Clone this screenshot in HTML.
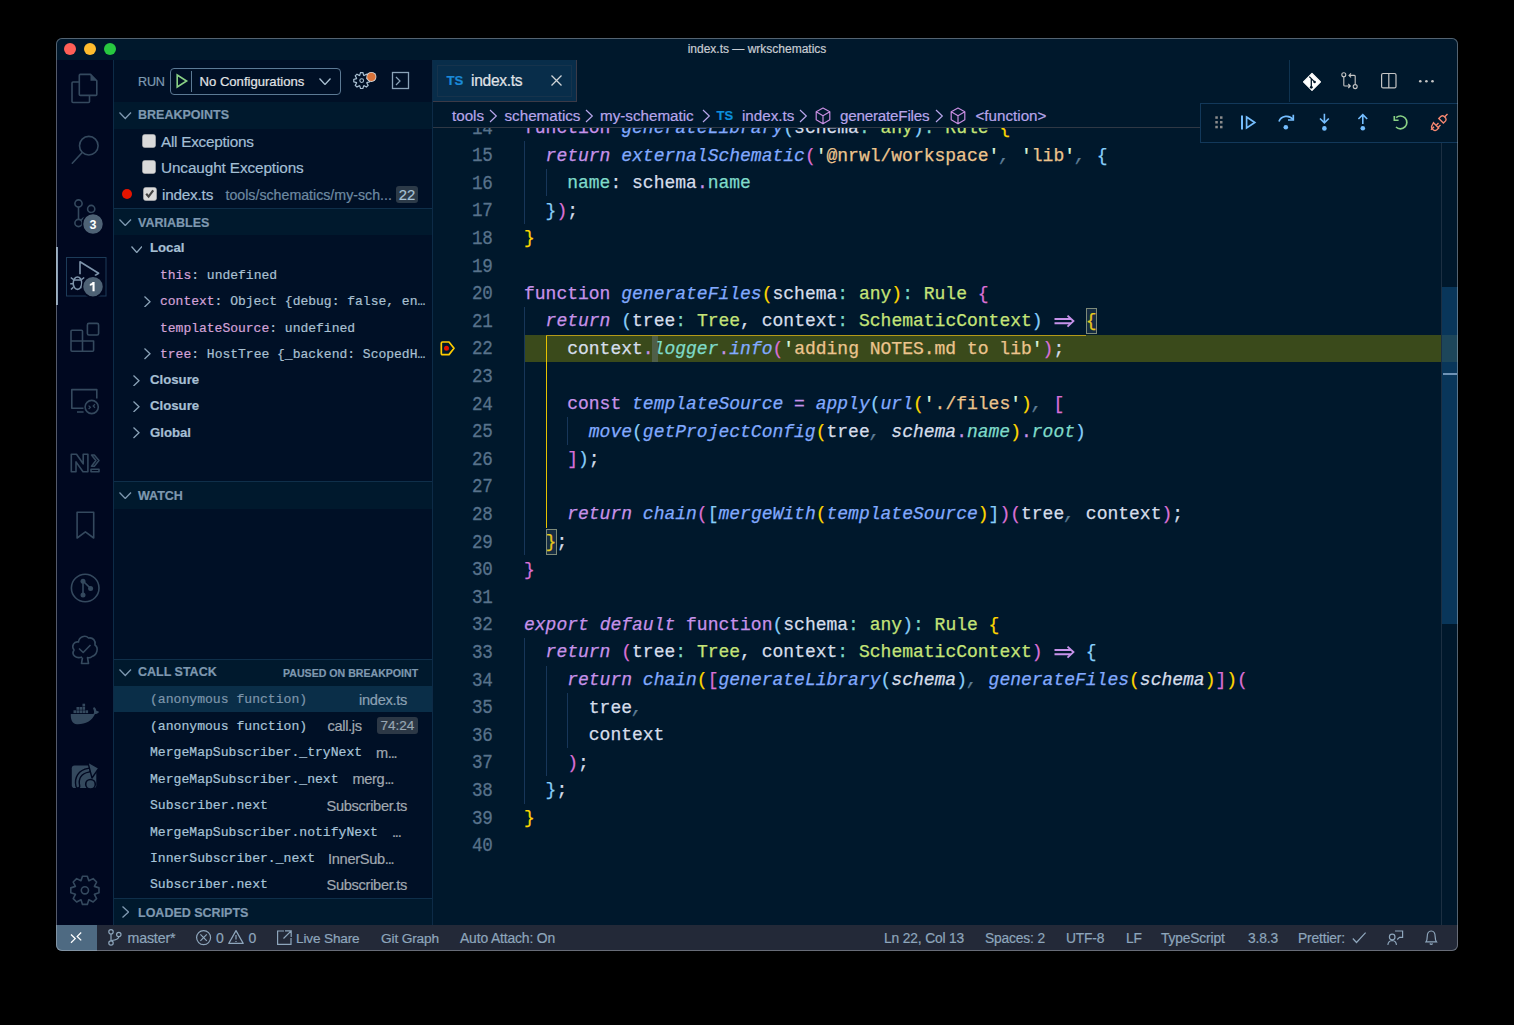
<!DOCTYPE html><html><head><meta charset="utf-8"><style>html,body{margin:0;padding:0;}body{width:1514px;height:1025px;background:#000;position:relative;overflow:hidden;font-family:"Liberation Sans",sans-serif;}div{box-sizing:border-box;-webkit-text-stroke:0.2px currentColor}.m{-webkit-text-stroke:0.25px currentColor}</style></head><body>
<div style="position:absolute;left:56px;top:38px;width:1402px;height:913px;border-radius:6px;overflow:hidden;background:#00182c">
<div style="position:absolute;left:-56px;top:-38px;width:1514px;height:1025px">
<div style="position:absolute;left:56px;top:38px;width:1402px;height:22px;background:#00182c"></div>
<div style="position:absolute;left:64px;top:43px;width:12px;height:12px;background:#fe5f57;border-radius:50%"></div>
<div style="position:absolute;left:84px;top:43px;width:12px;height:12px;background:#febc2e;border-radius:50%"></div>
<div style="position:absolute;left:104px;top:43px;width:12px;height:12px;background:#28c840;border-radius:50%"></div>
<div style="position:absolute;left:600px;top:38px;height:22px;line-height:22px;white-space:pre;width:314px;font-size:12px;color:#c8ccd2;text-align:center;font-family:'Liberation Sans', sans-serif">index.ts — wrkschematics</div>
<div style="position:absolute;left:56px;top:60px;width:57px;height:865px;background:#000820"></div>
<div style="position:absolute;left:56px;top:247px;width:2px;height:58px;background:#8aa0b5"></div>
<div style="position:absolute;left:113px;top:60px;width:1px;height:865px;background:#0d2b47"></div>
<div style="position:absolute;left:114px;top:60px;width:318px;height:865px;background:#001026"></div>
<div style="position:absolute;left:432px;top:60px;width:1px;height:865px;background:#0d2b47"></div>
<div style="position:absolute;left:138px;top:72px;height:20px;line-height:20px;white-space:pre;font-size:12.6px;color:#7f9ab2;letter-spacing:-0.2px">RUN</div>
<div style="position:absolute;left:170px;top:68px;width:171px;height:27px;border:1px solid #5c7a94;border-radius:4px"></div>
<svg style="position:absolute;left:175px;top:73px" width="14" height="16" viewBox="0 0 14 16"><path d="M2.2 2 L11.6 8 L2.2 14 Z" fill="none" stroke="#89d185" stroke-width="1.6" stroke-linejoin="miter"/></svg>
<div style="position:absolute;left:191px;top:71px;width:1px;height:21px;background:#5c7a94"></div>
<div style="position:absolute;left:199.5px;top:71.5px;height:20px;line-height:20px;white-space:pre;font-size:13.1px;color:#e2e4e6">No Configurations</div>
<svg style="position:absolute;left:318.5px;top:77.5px" width="12" height="7.5" viewBox="0 0 12 7.5"><path d="M0.5 0.5 L6.0 6.5 L11.5 0.5" fill="none" stroke="#a9c0d2" stroke-width="1.3"/></svg>
<svg style="position:absolute;left:352px;top:71px" width="26" height="20" viewBox="0 0 26 20"><polygon points="14.94,7.63 17.61,8.40 17.61,10.80 14.94,11.57 14.80,11.91 16.14,14.35 14.45,16.04 12.01,14.70 11.67,14.84 10.90,17.51 8.50,17.51 7.73,14.84 7.39,14.70 4.95,16.04 3.26,14.35 4.60,11.91 4.46,11.57 1.79,10.80 1.79,8.40 4.46,7.63 4.60,7.29 3.26,4.85 4.95,3.16 7.39,4.50 7.73,4.36 8.50,1.69 10.90,1.69 11.67,4.36 12.01,4.50 14.45,3.16 16.14,4.85 14.80,7.29" fill="none" stroke="#a9c0d2" stroke-width="1.2"/><circle cx="9.699999999999989" cy="9.599999999999994" r="1.9" fill="none" stroke="#a9c0d2" stroke-width="1.1"/><circle cx="19.4" cy="5.9" r="5" fill="#d8d8d8"/><circle cx="19.4" cy="5.9" r="4.2" fill="#d9733a"/></svg>
<svg style="position:absolute;left:391px;top:71px" width="19" height="19" viewBox="0 0 19 19"><rect x="1.5" y="1.5" width="16" height="16" fill="none" stroke="#8aa3b8" stroke-width="1.3"/><path d="M5 6 L9 10 L5 14" fill="none" stroke="#8aa3b8" stroke-width="1.2"/></svg>
<div style="position:absolute;left:114px;top:101.5px;width:318px;height:27px;background:#00192d"></div>
<svg style="position:absolute;left:119px;top:112.0px" width="12.5" height="7.5" viewBox="0 0 12.5 7.5"><path d="M0.5 0.5 L6.25 6.5 L12.0 0.5" fill="none" stroke="#7e98b0" stroke-width="1.3"/></svg>
<div style="position:absolute;left:138px;top:102.0px;height:27px;line-height:27px;white-space:pre;font-size:12.5px;font-weight:bold;color:#7e98b0">BREAKPOINTS</div>
<svg style="position:absolute;left:141.7px;top:133.7px" width="14" height="14" viewBox="0 0 14 14"><rect x="0.5" y="0.5" width="13" height="13" rx="2.2" fill="#dadada" stroke="#b9b9b9" stroke-width="0.6"/></svg>
<div style="position:absolute;left:161px;top:128.5px;height:26.4px;line-height:26.4px;white-space:pre;font-size:15.3px;color:#a3bfd5;letter-spacing:-0.25px">All Exceptions</div>
<svg style="position:absolute;left:141.7px;top:159.5px" width="14" height="14" viewBox="0 0 14 14"><rect x="0.5" y="0.5" width="13" height="13" rx="2.2" fill="#dadada" stroke="#b9b9b9" stroke-width="0.6"/></svg>
<div style="position:absolute;left:161px;top:155px;height:26.4px;line-height:26.4px;white-space:pre;font-size:15.3px;color:#a3bfd5;letter-spacing:-0.1px">Uncaught Exceptions</div>
<div style="position:absolute;left:122.2px;top:189.2px;width:10px;height:10px;background:#e51400;border-radius:50%"></div>
<svg style="position:absolute;left:142.5px;top:186.7px" width="14" height="14" viewBox="0 0 14 14"><rect x="0.5" y="0.5" width="13" height="13" rx="2.2" fill="#dadada" stroke="#b9b9b9" stroke-width="0.6"/><path d="M3.2 6.8 L5.6 9.6 L10.2 3.4" fill="none" stroke="#444" stroke-width="2.2"/></svg>
<div style="position:absolute;left:162px;top:181.5px;height:26.4px;line-height:26.4px;white-space:pre;font-size:15.3px;color:#a3bfd5;letter-spacing:-0.2px">index.ts</div>
<div style="position:absolute;left:225.5px;top:181.5px;height:26.4px;line-height:26.4px;white-space:pre;font-size:14.2px;color:#6e8aa2;letter-spacing:0px">tools/schematics/my-sch...</div>
<div style="position:absolute;left:396px;top:186px;width:22px;height:16.5px;background:#2c3a48;border-radius:3px"></div>
<div style="position:absolute;left:396px;top:187.2px;height:16.5px;line-height:16.5px;white-space:pre;font-size:14.8px;color:#a8c2d6;text-align:center;width:22px">22</div>
<div style="position:absolute;left:114px;top:208.3px;width:318px;height:1px;background:#0f2f4a"></div>
<div style="position:absolute;left:114px;top:209.3px;width:318px;height:25.5px;background:#00192d"></div>
<svg style="position:absolute;left:119px;top:218.8px" width="12.5" height="7.5" viewBox="0 0 12.5 7.5"><path d="M0.5 0.5 L6.25 6.5 L12.0 0.5" fill="none" stroke="#7e98b0" stroke-width="1.3"/></svg>
<div style="position:absolute;left:138px;top:209.55px;height:27px;line-height:27px;white-space:pre;font-size:12.5px;font-weight:bold;color:#7e98b0">VARIABLES</div>
<svg style="position:absolute;left:130.5px;top:245.5px" width="11.5" height="7.5" viewBox="0 0 11.5 7.5"><path d="M0.5 0.5 L5.75 6.5 L11.0 0.5" fill="none" stroke="#8aa3b8" stroke-width="1.3"/></svg>
<div style="position:absolute;left:150px;top:235px;height:26.4px;line-height:26.4px;white-space:pre;font-size:13.2px;font-weight:bold;color:#a6bfd3">Local</div>
<div style="position:absolute;left:160px;top:262.8px;height:26.4px;line-height:26.4px;white-space:pre;font-family:'Liberation Mono', monospace;font-size:13px"><span style="color:#d4a2d8">this</span><span style="color:#a9c0d2">: </span><span style="color:#a9c0d2">undefined</span></div>
<svg style="position:absolute;left:144px;top:295.5px" width="7" height="11.5" viewBox="0 0 7 11.5"><path d="M0.5 0.5 L6 5.75 L0.5 11.0" fill="none" stroke="#8aa3b8" stroke-width="1.3"/></svg>
<div style="position:absolute;left:160px;top:289.3px;height:26.4px;line-height:26.4px;white-space:pre;font-family:'Liberation Mono', monospace;font-size:13px"><span style="color:#d4a2d8">context</span><span style="color:#a9c0d2">: </span><span style="color:#a9c0d2">Object {debug: false, en…</span></div>
<div style="position:absolute;left:160px;top:315.6px;height:26.4px;line-height:26.4px;white-space:pre;font-family:'Liberation Mono', monospace;font-size:13px"><span style="color:#d4a2d8">templateSource</span><span style="color:#a9c0d2">: </span><span style="color:#a9c0d2">undefined</span></div>
<svg style="position:absolute;left:144px;top:348.3px" width="7" height="11.5" viewBox="0 0 7 11.5"><path d="M0.5 0.5 L6 5.75 L0.5 11.0" fill="none" stroke="#8aa3b8" stroke-width="1.3"/></svg>
<div style="position:absolute;left:160px;top:342px;height:26.4px;line-height:26.4px;white-space:pre;font-family:'Liberation Mono', monospace;font-size:13px"><span style="color:#d4a2d8">tree</span><span style="color:#a9c0d2">: </span><span style="color:#a9c0d2">HostTree {_backend: ScopedH…</span></div>
<svg style="position:absolute;left:133px;top:374.5px" width="7" height="11.5" viewBox="0 0 7 11.5"><path d="M0.5 0.5 L6 5.75 L0.5 11.0" fill="none" stroke="#8aa3b8" stroke-width="1.3"/></svg>
<div style="position:absolute;left:150px;top:367.0px;height:26.4px;line-height:26.4px;white-space:pre;font-size:13.2px;font-weight:bold;color:#a6bfd3">Closure</div>
<svg style="position:absolute;left:133px;top:400.9px" width="7" height="11.5" viewBox="0 0 7 11.5"><path d="M0.5 0.5 L6 5.75 L0.5 11.0" fill="none" stroke="#8aa3b8" stroke-width="1.3"/></svg>
<div style="position:absolute;left:150px;top:393.4px;height:26.4px;line-height:26.4px;white-space:pre;font-size:13.2px;font-weight:bold;color:#a6bfd3">Closure</div>
<svg style="position:absolute;left:133px;top:427.3px" width="7" height="11.5" viewBox="0 0 7 11.5"><path d="M0.5 0.5 L6 5.75 L0.5 11.0" fill="none" stroke="#8aa3b8" stroke-width="1.3"/></svg>
<div style="position:absolute;left:150px;top:419.8px;height:26.4px;line-height:26.4px;white-space:pre;font-size:13.2px;font-weight:bold;color:#a6bfd3">Global</div>
<div style="position:absolute;left:114px;top:481.4px;width:318px;height:1px;background:#0f2f4a"></div>
<div style="position:absolute;left:114px;top:482.4px;width:318px;height:26.7px;background:#00192d"></div>
<svg style="position:absolute;left:119px;top:491.9px" width="12.5" height="7.5" viewBox="0 0 12.5 7.5"><path d="M0.5 0.5 L6.25 6.5 L12.0 0.5" fill="none" stroke="#7e98b0" stroke-width="1.3"/></svg>
<div style="position:absolute;left:138px;top:483.05px;height:27px;line-height:27px;white-space:pre;font-size:12.5px;font-weight:bold;color:#7e98b0">WATCH</div>
<div style="position:absolute;left:114px;top:658.5px;width:318px;height:1px;background:#0f2f4a"></div>
<div style="position:absolute;left:114px;top:659.5px;width:318px;height:26.7px;background:#00192d"></div>
<svg style="position:absolute;left:119px;top:669.0px" width="12.5" height="7.5" viewBox="0 0 12.5 7.5"><path d="M0.5 0.5 L6.25 6.5 L12.0 0.5" fill="none" stroke="#7e98b0" stroke-width="1.3"/></svg>
<div style="position:absolute;left:138px;top:659.45px;height:27px;line-height:27px;white-space:pre;font-size:12.5px;font-weight:bold;color:#7e98b0">CALL STACK</div>
<div style="position:absolute;left:283px;top:659.6px;height:27px;line-height:27px;white-space:pre;font-size:10.6px;font-weight:bold;color:#7e98b0">PAUSED ON BREAKPOINT</div>
<div style="position:absolute;left:114px;top:686.2px;width:318px;height:25.8px;background:#0a2e48"></div>
<div style="position:absolute;left:150px;top:687.3px;height:26.4px;line-height:26.4px;white-space:pre;font-family:'Liberation Mono', monospace;font-size:13.1px"><span style="color:#7d95ab">(anonymous function)</span></div>
<div style="position:absolute;right:1107px;top:687.0px;height:26.4px;line-height:26.4px;white-space:pre;font-size:14.6px;color:#8aa0b3;letter-spacing:-0.3px">index.ts</div>
<div style="position:absolute;left:150px;top:713.75px;height:26.4px;line-height:26.4px;white-space:pre;font-family:'Liberation Mono', monospace;font-size:13.1px"><span style="color:#a8c4d8">(anonymous function)</span></div>
<div style="position:absolute;left:377px;top:717.45px;width:41px;height:17px;background:#2c3846;border-radius:3px"></div>
<div style="position:absolute;left:377px;top:717.45px;height:17px;line-height:17px;white-space:pre;font-size:13.5px;color:#98a6b2;text-align:center;width:41px">74:24</div>
<div style="position:absolute;left:327.4px;top:713.45px;height:26.4px;line-height:26.4px;white-space:pre;font-size:14.6px;color:#a0a8b0;letter-spacing:-0.3px">call.js</div>
<div style="position:absolute;left:150px;top:740.1999999999999px;height:26.4px;line-height:26.4px;white-space:pre;font-family:'Liberation Mono', monospace;font-size:13.1px"><span style="color:#a8c4d8">MergeMapSubscriber._tryNext</span></div>
<div style="position:absolute;left:376px;top:739.9px;height:26.4px;line-height:26.4px;white-space:pre;font-size:14.6px;color:#a0a8b0;letter-spacing:-0.3px">m<span style="letter-spacing:-1.2px">...</span></div>
<div style="position:absolute;left:150px;top:766.65px;height:26.4px;line-height:26.4px;white-space:pre;font-family:'Liberation Mono', monospace;font-size:13.1px"><span style="color:#a8c4d8">MergeMapSubscriber._next</span></div>
<div style="position:absolute;left:352.4px;top:766.35px;height:26.4px;line-height:26.4px;white-space:pre;font-size:14.6px;color:#a0a8b0;letter-spacing:-0.3px">merg<span style="letter-spacing:-1.2px">...</span></div>
<div style="position:absolute;left:150px;top:793.0999999999999px;height:26.4px;line-height:26.4px;white-space:pre;font-family:'Liberation Mono', monospace;font-size:13.1px"><span style="color:#a8c4d8">Subscriber.next</span></div>
<div style="position:absolute;right:1107px;top:792.8px;height:26.4px;line-height:26.4px;white-space:pre;font-size:14.6px;color:#a0a8b0;letter-spacing:-0.3px">Subscriber.ts</div>
<div style="position:absolute;left:150px;top:819.55px;height:26.4px;line-height:26.4px;white-space:pre;font-family:'Liberation Mono', monospace;font-size:13.1px"><span style="color:#a8c4d8">MergeMapSubscriber.notifyNext</span></div>
<div style="position:absolute;left:392px;top:819.25px;height:26.4px;line-height:26.4px;white-space:pre;font-size:14.6px;color:#a0a8b0;letter-spacing:-0.3px"><span style="letter-spacing:-1.2px">...</span></div>
<div style="position:absolute;left:150px;top:846.0px;height:26.4px;line-height:26.4px;white-space:pre;font-family:'Liberation Mono', monospace;font-size:13.1px"><span style="color:#a8c4d8">InnerSubscriber._next</span></div>
<div style="position:absolute;left:328px;top:845.7px;height:26.4px;line-height:26.4px;white-space:pre;font-size:14.6px;color:#a0a8b0;letter-spacing:-0.3px">InnerSub<span style="letter-spacing:-1.2px">...</span></div>
<div style="position:absolute;left:150px;top:872.4499999999999px;height:26.4px;line-height:26.4px;white-space:pre;font-family:'Liberation Mono', monospace;font-size:13.1px"><span style="color:#a8c4d8">Subscriber.next</span></div>
<div style="position:absolute;right:1107px;top:872.15px;height:26.4px;line-height:26.4px;white-space:pre;font-size:14.6px;color:#a0a8b0;letter-spacing:-0.3px">Subscriber.ts</div>
<div style="position:absolute;left:114px;top:898px;width:318px;height:1px;background:#0f2f4a"></div>
<div style="position:absolute;left:114px;top:899px;width:318px;height:26.5px;background:#00192d"></div>
<svg style="position:absolute;left:121.5px;top:906px" width="7.5" height="12" viewBox="0 0 7.5 12"><path d="M0.5 0.5 L6.5 6.0 L0.5 11.5" fill="none" stroke="#7e98b0" stroke-width="1.3"/></svg>
<div style="position:absolute;left:138px;top:899.55px;height:27px;line-height:27px;white-space:pre;font-size:12.5px;font-weight:bold;color:#7e98b0">LOADED SCRIPTS</div>
<div style="position:absolute;left:433px;top:60px;width:1025px;height:42px;background:#00182c"></div>
<div style="position:absolute;left:433px;top:60px;width:144px;height:42px;background:#082d4a;border-right:1px solid #3b3a47;border-bottom:1px solid #3b3a47"></div>
<div style="position:absolute;left:437px;top:65px;width:135px;height:32px;border:1px solid #16334c"></div>
<div style="position:absolute;left:446.5px;top:70px;height:22px;line-height:22px;white-space:pre;font-size:13.2px;font-weight:bold;color:#1a8ad8;letter-spacing:0px">TS</div>
<div style="position:absolute;left:471px;top:70px;height:22px;line-height:22px;white-space:pre;font-size:15.6px;color:#e0e4e8;letter-spacing:-0.3px">index.ts</div>
<svg style="position:absolute;left:550px;top:74px" width="13" height="13" viewBox="0 0 13 13"><path d="M1.5 1.5 L11.5 11.5 M11.5 1.5 L1.5 11.5" stroke="#d0d4d8" stroke-width="1.3"/></svg>
<div style="position:absolute;left:1289px;top:60px;width:1px;height:42px;background:#0f3350"></div>
<svg style="position:absolute;left:1300px;top:70px" width="150" height="24" viewBox="1300 70 150 24">
<path d="M1312 73.4 L1320.5 81.9 L1312 90.4 L1303.5 81.9 Z" fill="#ffffff" stroke="#ffffff" stroke-width="1.2" stroke-linejoin="round"/>
<path d="M1309.3 76.6 L1314.3 81.6 M1311.3 79 V87" stroke="#011627" stroke-width="1.3"/>
<circle cx="1311.3" cy="87.3" r="1.4" fill="#011627"/><circle cx="1314.6" cy="82" r="1.3" fill="#011627"/>
<circle cx="1343.8" cy="74.8" r="2" fill="none" stroke="#c5c5c5" stroke-width="1.1"/>
<circle cx="1355.2" cy="86.6" r="2" fill="none" stroke="#c5c5c5" stroke-width="1.1"/>
<path d="M1343.8 76.8 V85.2 Q1343.8 86 1345 86 H1350 M1348.3 84 L1350.3 86 L1348.3 88" fill="none" stroke="#c5c5c5" stroke-width="1.1"/>
<path d="M1355.2 84.6 V76.2 Q1355.2 75.4 1354 75.4 H1349.2 M1351 73.4 L1349 75.4 L1351 77.4" fill="none" stroke="#c5c5c5" stroke-width="1.1"/>
<rect x="1381.6" y="73.5" width="14.4" height="14.4" rx="1.5" fill="none" stroke="#c5c5c5" stroke-width="1.2"/>
<path d="M1388.8 73.5 V88" stroke="#c5c5c5" stroke-width="1.2"/>
<circle cx="1420.3" cy="81.3" r="1.3" fill="#c5c5c5"/><circle cx="1426.4" cy="81.3" r="1.3" fill="#c5c5c5"/><circle cx="1432.5" cy="81.3" r="1.3" fill="#c5c5c5"/>
</svg>
<div style="position:absolute;left:524px;top:334.5px;width:918px;height:27.6px;background:#3a4a1b"></div>
<div style="position:absolute;left:652.4px;top:334.5px;width:5.5px;height:27.6px;background:#4f5f48"></div>
<div class="m" style="position:absolute;left:524px;top:114.90px;height:27.6px;line-height:27.6px;white-space:pre;font-family:'Liberation Mono', monospace;font-size:18px;color:#d6deeb"><span style="color:#c792ea">function</span> <span style="color:#82aaff;font-style:italic">generateLibrary</span><span style="color:#87cefa">(</span><span style="color:#d6deeb">schema</span><span style="color:#7fdbca">:</span> <span style="color:#c5e478">any</span><span style="color:#87cefa">)</span><span style="color:#7fdbca">:</span> <span style="color:#c5e478">Rule</span> <span style="color:#ffd700">{</span></div>
<div class="m" style="position:absolute;left:432px;top:114.50px;width:60.5px;height:27.6px;line-height:27.6px;text-align:right;font-family:'Liberation Mono', monospace;font-size:17.6px;letter-spacing:-0.3px;color:#58728b;transform:scaleY(1.16);transform-origin:50% 52%">14</div>
<div class="m" style="position:absolute;left:524px;top:142.50px;height:27.6px;line-height:27.6px;white-space:pre;font-family:'Liberation Mono', monospace;font-size:18px;color:#d6deeb">  <span style="color:#c792ea;font-style:italic">return</span> <span style="color:#82aaff;font-style:italic">externalSchematic</span><span style="color:#da70d6">(</span><span style="color:#d9f5dd">'</span><span style="color:#ecc48d">@nrwl/workspace</span><span style="color:#d9f5dd">'</span><span style="color:#5f7e97;font-style:italic">,</span> <span style="color:#d9f5dd">'</span><span style="color:#ecc48d">lib</span><span style="color:#d9f5dd">'</span><span style="color:#5f7e97;font-style:italic">,</span> <span style="color:#87cefa">{</span></div>
<div class="m" style="position:absolute;left:432px;top:142.10px;width:60.5px;height:27.6px;line-height:27.6px;text-align:right;font-family:'Liberation Mono', monospace;font-size:17.6px;letter-spacing:-0.3px;color:#58728b;transform:scaleY(1.16);transform-origin:50% 52%">15</div>
<div class="m" style="position:absolute;left:524px;top:170.10px;height:27.6px;line-height:27.6px;white-space:pre;font-family:'Liberation Mono', monospace;font-size:18px;color:#d6deeb">    <span style="color:#7fdbca">name</span><span style="color:#d6deeb">:</span> <span style="color:#d6deeb">schema</span><span style="color:#c792ea">.</span><span style="color:#7fdbca">name</span></div>
<div class="m" style="position:absolute;left:432px;top:169.70px;width:60.5px;height:27.6px;line-height:27.6px;text-align:right;font-family:'Liberation Mono', monospace;font-size:17.6px;letter-spacing:-0.3px;color:#58728b;transform:scaleY(1.16);transform-origin:50% 52%">16</div>
<div class="m" style="position:absolute;left:524px;top:197.70px;height:27.6px;line-height:27.6px;white-space:pre;font-family:'Liberation Mono', monospace;font-size:18px;color:#d6deeb">  <span style="color:#87cefa">}</span><span style="color:#da70d6">)</span><span style="color:#d6deeb">;</span></div>
<div class="m" style="position:absolute;left:432px;top:197.30px;width:60.5px;height:27.6px;line-height:27.6px;text-align:right;font-family:'Liberation Mono', monospace;font-size:17.6px;letter-spacing:-0.3px;color:#58728b;transform:scaleY(1.16);transform-origin:50% 52%">17</div>
<div class="m" style="position:absolute;left:524px;top:225.30px;height:27.6px;line-height:27.6px;white-space:pre;font-family:'Liberation Mono', monospace;font-size:18px;color:#d6deeb"><span style="color:#ffd700">}</span></div>
<div class="m" style="position:absolute;left:432px;top:224.90px;width:60.5px;height:27.6px;line-height:27.6px;text-align:right;font-family:'Liberation Mono', monospace;font-size:17.6px;letter-spacing:-0.3px;color:#58728b;transform:scaleY(1.16);transform-origin:50% 52%">18</div>
<div class="m" style="position:absolute;left:524px;top:252.90px;height:27.6px;line-height:27.6px;white-space:pre;font-family:'Liberation Mono', monospace;font-size:18px;color:#d6deeb"></div>
<div class="m" style="position:absolute;left:432px;top:252.50px;width:60.5px;height:27.6px;line-height:27.6px;text-align:right;font-family:'Liberation Mono', monospace;font-size:17.6px;letter-spacing:-0.3px;color:#58728b;transform:scaleY(1.16);transform-origin:50% 52%">19</div>
<div class="m" style="position:absolute;left:524px;top:280.50px;height:27.6px;line-height:27.6px;white-space:pre;font-family:'Liberation Mono', monospace;font-size:18px;color:#d6deeb"><span style="color:#c792ea">function</span> <span style="color:#82aaff;font-style:italic">generateFiles</span><span style="color:#ffd700">(</span><span style="color:#d6deeb">schema</span><span style="color:#7fdbca">:</span> <span style="color:#c5e478">any</span><span style="color:#ffd700">)</span><span style="color:#7fdbca">:</span> <span style="color:#c5e478">Rule</span> <span style="color:#da70d6">{</span></div>
<div class="m" style="position:absolute;left:432px;top:280.10px;width:60.5px;height:27.6px;line-height:27.6px;text-align:right;font-family:'Liberation Mono', monospace;font-size:17.6px;letter-spacing:-0.3px;color:#58728b;transform:scaleY(1.16);transform-origin:50% 52%">20</div>
<div class="m" style="position:absolute;left:524px;top:308.10px;height:27.6px;line-height:27.6px;white-space:pre;font-family:'Liberation Mono', monospace;font-size:18px;color:#d6deeb">  <span style="color:#c792ea;font-style:italic">return</span> <span style="color:#87cefa">(</span><span style="color:#d6deeb">tree</span><span style="color:#7fdbca">:</span> <span style="color:#c5e478">Tree</span><span style="color:#d6deeb">,</span> <span style="color:#d6deeb">context</span><span style="color:#7fdbca">:</span> <span style="color:#c5e478">SchematicContext</span><span style="color:#87cefa">)</span> <span style="display:inline-block;width:21.6px;height:10px;position:relative"><svg style="position:absolute;left:1px;top:-2.2px" width="21" height="14" viewBox="0 0 21 14"><path d="M0.5 5 H17.5 M0.5 9.2 H17.5 M13.5 1.6 L19.4 7.1 L13.5 12.6" fill="none" stroke="#c792ea" stroke-width="1.9"/></svg></span> <span style="color:#ffd700">{</span></div>
<div class="m" style="position:absolute;left:432px;top:307.70px;width:60.5px;height:27.6px;line-height:27.6px;text-align:right;font-family:'Liberation Mono', monospace;font-size:17.6px;letter-spacing:-0.3px;color:#58728b;transform:scaleY(1.16);transform-origin:50% 52%">21</div>
<div class="m" style="position:absolute;left:524px;top:335.70px;height:27.6px;line-height:27.6px;white-space:pre;font-family:'Liberation Mono', monospace;font-size:18px;color:#d6deeb">    <span style="color:#d6deeb">context</span><span style="color:#c792ea">.</span><span style="color:#7fdbca;font-style:italic">logger</span><span style="color:#c792ea">.</span><span style="color:#82aaff;font-style:italic">info</span><span style="color:#da70d6">(</span><span style="color:#d9f5dd">'</span><span style="color:#ecc48d">adding NOTES.md to lib</span><span style="color:#d9f5dd">'</span><span style="color:#da70d6">)</span><span style="color:#d6deeb">;</span></div>
<div class="m" style="position:absolute;left:432px;top:335.30px;width:60.5px;height:27.6px;line-height:27.6px;text-align:right;font-family:'Liberation Mono', monospace;font-size:17.6px;letter-spacing:-0.3px;color:#58728b;transform:scaleY(1.16);transform-origin:50% 52%">22</div>
<div class="m" style="position:absolute;left:524px;top:363.30px;height:27.6px;line-height:27.6px;white-space:pre;font-family:'Liberation Mono', monospace;font-size:18px;color:#d6deeb"></div>
<div class="m" style="position:absolute;left:432px;top:362.90px;width:60.5px;height:27.6px;line-height:27.6px;text-align:right;font-family:'Liberation Mono', monospace;font-size:17.6px;letter-spacing:-0.3px;color:#58728b;transform:scaleY(1.16);transform-origin:50% 52%">23</div>
<div class="m" style="position:absolute;left:524px;top:390.90px;height:27.6px;line-height:27.6px;white-space:pre;font-family:'Liberation Mono', monospace;font-size:18px;color:#d6deeb">    <span style="color:#c792ea">const</span> <span style="color:#82aaff;font-style:italic">templateSource</span> <span style="color:#c792ea">=</span> <span style="color:#82aaff;font-style:italic">apply</span><span style="color:#87cefa">(</span><span style="color:#82aaff;font-style:italic">url</span><span style="color:#ffd700">(</span><span style="color:#d9f5dd">'</span><span style="color:#ecc48d">./files</span><span style="color:#d9f5dd">'</span><span style="color:#ffd700">)</span><span style="color:#5f7e97;font-style:italic">,</span> <span style="color:#da70d6">[</span></div>
<div class="m" style="position:absolute;left:432px;top:390.50px;width:60.5px;height:27.6px;line-height:27.6px;text-align:right;font-family:'Liberation Mono', monospace;font-size:17.6px;letter-spacing:-0.3px;color:#58728b;transform:scaleY(1.16);transform-origin:50% 52%">24</div>
<div class="m" style="position:absolute;left:524px;top:418.50px;height:27.6px;line-height:27.6px;white-space:pre;font-family:'Liberation Mono', monospace;font-size:18px;color:#d6deeb">      <span style="color:#82aaff;font-style:italic">move</span><span style="color:#87cefa">(</span><span style="color:#82aaff;font-style:italic">getProjectConfig</span><span style="color:#ffd700">(</span><span style="color:#d6deeb">tree</span><span style="color:#5f7e97;font-style:italic">,</span> <span style="color:#d6deeb;font-style:italic">schema</span><span style="color:#c792ea">.</span><span style="color:#7fdbca;font-style:italic">name</span><span style="color:#ffd700">)</span><span style="color:#c792ea">.</span><span style="color:#7fdbca;font-style:italic">root</span><span style="color:#87cefa">)</span></div>
<div class="m" style="position:absolute;left:432px;top:418.10px;width:60.5px;height:27.6px;line-height:27.6px;text-align:right;font-family:'Liberation Mono', monospace;font-size:17.6px;letter-spacing:-0.3px;color:#58728b;transform:scaleY(1.16);transform-origin:50% 52%">25</div>
<div class="m" style="position:absolute;left:524px;top:446.10px;height:27.6px;line-height:27.6px;white-space:pre;font-family:'Liberation Mono', monospace;font-size:18px;color:#d6deeb">    <span style="color:#da70d6">]</span><span style="color:#87cefa">)</span><span style="color:#d6deeb">;</span></div>
<div class="m" style="position:absolute;left:432px;top:445.70px;width:60.5px;height:27.6px;line-height:27.6px;text-align:right;font-family:'Liberation Mono', monospace;font-size:17.6px;letter-spacing:-0.3px;color:#58728b;transform:scaleY(1.16);transform-origin:50% 52%">26</div>
<div class="m" style="position:absolute;left:524px;top:473.70px;height:27.6px;line-height:27.6px;white-space:pre;font-family:'Liberation Mono', monospace;font-size:18px;color:#d6deeb"></div>
<div class="m" style="position:absolute;left:432px;top:473.30px;width:60.5px;height:27.6px;line-height:27.6px;text-align:right;font-family:'Liberation Mono', monospace;font-size:17.6px;letter-spacing:-0.3px;color:#58728b;transform:scaleY(1.16);transform-origin:50% 52%">27</div>
<div class="m" style="position:absolute;left:524px;top:501.30px;height:27.6px;line-height:27.6px;white-space:pre;font-family:'Liberation Mono', monospace;font-size:18px;color:#d6deeb">    <span style="color:#c792ea;font-style:italic">return</span> <span style="color:#82aaff;font-style:italic">chain</span><span style="color:#da70d6">(</span><span style="color:#87cefa">[</span><span style="color:#82aaff;font-style:italic">mergeWith</span><span style="color:#ffd700">(</span><span style="color:#82aaff;font-style:italic">templateSource</span><span style="color:#ffd700">)</span><span style="color:#87cefa">]</span><span style="color:#da70d6">)</span><span style="color:#da70d6">(</span><span style="color:#d6deeb">tree</span><span style="color:#5f7e97;font-style:italic">,</span> <span style="color:#d6deeb">context</span><span style="color:#da70d6">)</span><span style="color:#d6deeb">;</span></div>
<div class="m" style="position:absolute;left:432px;top:500.90px;width:60.5px;height:27.6px;line-height:27.6px;text-align:right;font-family:'Liberation Mono', monospace;font-size:17.6px;letter-spacing:-0.3px;color:#58728b;transform:scaleY(1.16);transform-origin:50% 52%">28</div>
<div class="m" style="position:absolute;left:524px;top:528.90px;height:27.6px;line-height:27.6px;white-space:pre;font-family:'Liberation Mono', monospace;font-size:18px;color:#d6deeb">  <span style="color:#ffd700">}</span><span style="color:#d6deeb">;</span></div>
<div class="m" style="position:absolute;left:432px;top:528.50px;width:60.5px;height:27.6px;line-height:27.6px;text-align:right;font-family:'Liberation Mono', monospace;font-size:17.6px;letter-spacing:-0.3px;color:#58728b;transform:scaleY(1.16);transform-origin:50% 52%">29</div>
<div class="m" style="position:absolute;left:524px;top:556.50px;height:27.6px;line-height:27.6px;white-space:pre;font-family:'Liberation Mono', monospace;font-size:18px;color:#d6deeb"><span style="color:#da70d6">}</span></div>
<div class="m" style="position:absolute;left:432px;top:556.10px;width:60.5px;height:27.6px;line-height:27.6px;text-align:right;font-family:'Liberation Mono', monospace;font-size:17.6px;letter-spacing:-0.3px;color:#58728b;transform:scaleY(1.16);transform-origin:50% 52%">30</div>
<div class="m" style="position:absolute;left:524px;top:584.10px;height:27.6px;line-height:27.6px;white-space:pre;font-family:'Liberation Mono', monospace;font-size:18px;color:#d6deeb"></div>
<div class="m" style="position:absolute;left:432px;top:583.70px;width:60.5px;height:27.6px;line-height:27.6px;text-align:right;font-family:'Liberation Mono', monospace;font-size:17.6px;letter-spacing:-0.3px;color:#58728b;transform:scaleY(1.16);transform-origin:50% 52%">31</div>
<div class="m" style="position:absolute;left:524px;top:611.70px;height:27.6px;line-height:27.6px;white-space:pre;font-family:'Liberation Mono', monospace;font-size:18px;color:#d6deeb"><span style="color:#c792ea;font-style:italic">export</span> <span style="color:#c792ea;font-style:italic">default</span> <span style="color:#c792ea">function</span><span style="color:#87cefa">(</span><span style="color:#d6deeb">schema</span><span style="color:#7fdbca">:</span> <span style="color:#c5e478">any</span><span style="color:#87cefa">)</span><span style="color:#7fdbca">:</span> <span style="color:#c5e478">Rule</span> <span style="color:#ffd700">{</span></div>
<div class="m" style="position:absolute;left:432px;top:611.30px;width:60.5px;height:27.6px;line-height:27.6px;text-align:right;font-family:'Liberation Mono', monospace;font-size:17.6px;letter-spacing:-0.3px;color:#58728b;transform:scaleY(1.16);transform-origin:50% 52%">32</div>
<div class="m" style="position:absolute;left:524px;top:639.30px;height:27.6px;line-height:27.6px;white-space:pre;font-family:'Liberation Mono', monospace;font-size:18px;color:#d6deeb">  <span style="color:#c792ea;font-style:italic">return</span> <span style="color:#da70d6">(</span><span style="color:#d6deeb">tree</span><span style="color:#7fdbca">:</span> <span style="color:#c5e478">Tree</span><span style="color:#d6deeb">,</span> <span style="color:#d6deeb">context</span><span style="color:#7fdbca">:</span> <span style="color:#c5e478">SchematicContext</span><span style="color:#da70d6">)</span> <span style="display:inline-block;width:21.6px;height:10px;position:relative"><svg style="position:absolute;left:1px;top:-2.2px" width="21" height="14" viewBox="0 0 21 14"><path d="M0.5 5 H17.5 M0.5 9.2 H17.5 M13.5 1.6 L19.4 7.1 L13.5 12.6" fill="none" stroke="#c792ea" stroke-width="1.9"/></svg></span> <span style="color:#87cefa">{</span></div>
<div class="m" style="position:absolute;left:432px;top:638.90px;width:60.5px;height:27.6px;line-height:27.6px;text-align:right;font-family:'Liberation Mono', monospace;font-size:17.6px;letter-spacing:-0.3px;color:#58728b;transform:scaleY(1.16);transform-origin:50% 52%">33</div>
<div class="m" style="position:absolute;left:524px;top:666.90px;height:27.6px;line-height:27.6px;white-space:pre;font-family:'Liberation Mono', monospace;font-size:18px;color:#d6deeb">    <span style="color:#c792ea;font-style:italic">return</span> <span style="color:#82aaff;font-style:italic">chain</span><span style="color:#ffd700">(</span><span style="color:#da70d6">[</span><span style="color:#82aaff;font-style:italic">generateLibrary</span><span style="color:#87cefa">(</span><span style="color:#d6deeb;font-style:italic">schema</span><span style="color:#87cefa">)</span><span style="color:#5f7e97;font-style:italic">,</span> <span style="color:#82aaff;font-style:italic">generateFiles</span><span style="color:#ffd700">(</span><span style="color:#d6deeb;font-style:italic">schema</span><span style="color:#ffd700">)</span><span style="color:#da70d6">]</span><span style="color:#ffd700">)</span><span style="color:#da70d6">(</span></div>
<div class="m" style="position:absolute;left:432px;top:666.50px;width:60.5px;height:27.6px;line-height:27.6px;text-align:right;font-family:'Liberation Mono', monospace;font-size:17.6px;letter-spacing:-0.3px;color:#58728b;transform:scaleY(1.16);transform-origin:50% 52%">34</div>
<div class="m" style="position:absolute;left:524px;top:694.50px;height:27.6px;line-height:27.6px;white-space:pre;font-family:'Liberation Mono', monospace;font-size:18px;color:#d6deeb">      <span style="color:#d6deeb">tree</span><span style="color:#5f7e97;font-style:italic">,</span></div>
<div class="m" style="position:absolute;left:432px;top:694.10px;width:60.5px;height:27.6px;line-height:27.6px;text-align:right;font-family:'Liberation Mono', monospace;font-size:17.6px;letter-spacing:-0.3px;color:#58728b;transform:scaleY(1.16);transform-origin:50% 52%">35</div>
<div class="m" style="position:absolute;left:524px;top:722.10px;height:27.6px;line-height:27.6px;white-space:pre;font-family:'Liberation Mono', monospace;font-size:18px;color:#d6deeb">      <span style="color:#d6deeb">context</span></div>
<div class="m" style="position:absolute;left:432px;top:721.70px;width:60.5px;height:27.6px;line-height:27.6px;text-align:right;font-family:'Liberation Mono', monospace;font-size:17.6px;letter-spacing:-0.3px;color:#58728b;transform:scaleY(1.16);transform-origin:50% 52%">36</div>
<div class="m" style="position:absolute;left:524px;top:749.70px;height:27.6px;line-height:27.6px;white-space:pre;font-family:'Liberation Mono', monospace;font-size:18px;color:#d6deeb">    <span style="color:#da70d6">)</span><span style="color:#d6deeb">;</span></div>
<div class="m" style="position:absolute;left:432px;top:749.30px;width:60.5px;height:27.6px;line-height:27.6px;text-align:right;font-family:'Liberation Mono', monospace;font-size:17.6px;letter-spacing:-0.3px;color:#58728b;transform:scaleY(1.16);transform-origin:50% 52%">37</div>
<div class="m" style="position:absolute;left:524px;top:777.30px;height:27.6px;line-height:27.6px;white-space:pre;font-family:'Liberation Mono', monospace;font-size:18px;color:#d6deeb">  <span style="color:#87cefa">}</span><span style="color:#d6deeb">;</span></div>
<div class="m" style="position:absolute;left:432px;top:776.90px;width:60.5px;height:27.6px;line-height:27.6px;text-align:right;font-family:'Liberation Mono', monospace;font-size:17.6px;letter-spacing:-0.3px;color:#58728b;transform:scaleY(1.16);transform-origin:50% 52%">38</div>
<div class="m" style="position:absolute;left:524px;top:804.90px;height:27.6px;line-height:27.6px;white-space:pre;font-family:'Liberation Mono', monospace;font-size:18px;color:#d6deeb"><span style="color:#ffd700">}</span></div>
<div class="m" style="position:absolute;left:432px;top:804.50px;width:60.5px;height:27.6px;line-height:27.6px;text-align:right;font-family:'Liberation Mono', monospace;font-size:17.6px;letter-spacing:-0.3px;color:#58728b;transform:scaleY(1.16);transform-origin:50% 52%">39</div>
<div class="m" style="position:absolute;left:524px;top:832.50px;height:27.6px;line-height:27.6px;white-space:pre;font-family:'Liberation Mono', monospace;font-size:18px;color:#d6deeb"></div>
<div class="m" style="position:absolute;left:432px;top:832.10px;width:60.5px;height:27.6px;line-height:27.6px;text-align:right;font-family:'Liberation Mono', monospace;font-size:17.6px;letter-spacing:-0.3px;color:#58728b;transform:scaleY(1.16);transform-origin:50% 52%">40</div>
<div style="position:absolute;left:524.0px;top:141.29999999999998px;width:1px;height:82.80000000000001px;background:#173659"></div>
<div style="position:absolute;left:545.6px;top:168.89999999999998px;width:1px;height:27.600000000000023px;background:#173659"></div>
<div style="position:absolute;left:524.0px;top:306.9px;width:1px;height:248.39999999999998px;background:#173659"></div>
<div style="position:absolute;left:567.2px;top:417.3px;width:1px;height:27.599999999999966px;background:#173659"></div>
<div style="position:absolute;left:524.0px;top:638.1px;width:1px;height:165.60000000000002px;background:#173659"></div>
<div style="position:absolute;left:545.6px;top:665.7px;width:1px;height:110.39999999999998px;background:#173659"></div>
<div style="position:absolute;left:567.2px;top:693.3px;width:1px;height:55.200000000000045px;background:#173659"></div>
<div style="position:absolute;left:546px;top:334.5px;width:1px;height:193.20000000000005px;background:#e6c200"></div>
<div style="position:absolute;left:546px;top:334.5px;width:540px;height:1px;background:#b39a1a"></div>
<div style="position:absolute;left:1085.6px;top:307.9px;width:11.8px;height:26.6px;border:1px solid #7e8a78;background:rgba(120,140,160,0.18)"></div>
<div style="position:absolute;left:545.6px;top:528.7px;width:11.8px;height:26.6px;border:1px solid #7e8a78;background:rgba(120,140,160,0.18)"></div>
<svg style="position:absolute;left:439px;top:339px" width="18" height="18" viewBox="0 0 18 18"><path d="M3.5 3 H10 L15 9.3 L10 15.6 H3.5 Q2.3 15.6 2.3 14.4 V4.2 Q2.3 3 3.5 3 Z" fill="none" stroke="#ffcc00" stroke-width="1.7" stroke-linejoin="round"/><circle cx="7.5" cy="9.3" r="2.5" fill="#e51400"/></svg>
<div style="position:absolute;left:433px;top:102px;width:1025px;height:25px;background:#00182c"></div>
<div style="position:absolute;left:433px;top:127px;width:1008px;height:1px;background:#2f3845"></div>
<div style="position:absolute;left:452px;top:103.8px;height:24px;line-height:24px;white-space:pre;font-size:15.2px;color:#b7a5ea;letter-spacing:0px">tools</div>
<svg style="position:absolute;left:489px;top:109px" width="9" height="14" viewBox="0 0 9 14"><path d="M1 1 L7.3 7 L1 13" fill="none" stroke="#b7a5ea" stroke-width="1.2"/></svg>
<div style="position:absolute;left:504.5px;top:103.8px;height:24px;line-height:24px;white-space:pre;font-size:15.2px;color:#b7a5ea;letter-spacing:0px">schematics</div>
<svg style="position:absolute;left:585px;top:109px" width="9" height="14" viewBox="0 0 9 14"><path d="M1 1 L7.3 7 L1 13" fill="none" stroke="#b7a5ea" stroke-width="1.2"/></svg>
<div style="position:absolute;left:600px;top:103.8px;height:24px;line-height:24px;white-space:pre;font-size:15.2px;color:#b7a5ea;letter-spacing:0px">my-schematic</div>
<svg style="position:absolute;left:701.5px;top:109px" width="9" height="14" viewBox="0 0 9 14"><path d="M1 1 L7.3 7 L1 13" fill="none" stroke="#b7a5ea" stroke-width="1.2"/></svg>
<div style="position:absolute;left:716.5px;top:104px;height:24px;line-height:24px;white-space:pre;font-size:13px;font-weight:bold;color:#0b8fdd;letter-spacing:0px">TS</div>
<div style="position:absolute;left:742px;top:103.8px;height:24px;line-height:24px;white-space:pre;font-size:15.2px;color:#b7a5ea;letter-spacing:0px">index.ts</div>
<svg style="position:absolute;left:798.5px;top:109px" width="9" height="14" viewBox="0 0 9 14"><path d="M1 1 L7.3 7 L1 13" fill="none" stroke="#b7a5ea" stroke-width="1.2"/></svg>
<svg style="position:absolute;left:814.5px;top:106.5px" width="16" height="18" viewBox="0 0 16 18"><path d="M8 1 L14.8 4.8 V12.8 L8 16.8 L1.2 12.8 V4.8 Z M1.2 4.8 L8 8.8 L14.8 4.8 M8 8.8 V16.8" fill="none" stroke="#c68de0" stroke-width="1.2" stroke-linejoin="round"/></svg>
<div style="position:absolute;left:840px;top:103.8px;height:24px;line-height:24px;white-space:pre;font-size:15.2px;color:#b7a5ea;letter-spacing:-0.2px">generateFiles</div>
<svg style="position:absolute;left:934.5px;top:109px" width="9" height="14" viewBox="0 0 9 14"><path d="M1 1 L7.3 7 L1 13" fill="none" stroke="#b7a5ea" stroke-width="1.2"/></svg>
<svg style="position:absolute;left:950px;top:106.5px" width="16" height="18" viewBox="0 0 16 18"><path d="M8 1 L14.8 4.8 V12.8 L8 16.8 L1.2 12.8 V4.8 Z M1.2 4.8 L8 8.8 L14.8 4.8 M8 8.8 V16.8" fill="none" stroke="#c68de0" stroke-width="1.2" stroke-linejoin="round"/></svg>
<div style="position:absolute;left:975.5px;top:103.8px;height:24px;line-height:24px;white-space:pre;font-size:15.2px;color:#b7a5ea;letter-spacing:0px">&lt;function&gt;</div>
<div style="position:absolute;left:1441px;top:128px;width:1px;height:797px;background:#1c2f42"></div>
<div style="position:absolute;left:1442px;top:287px;width:16px;height:337px;background:rgba(16,80,130,0.55)"></div>
<div style="position:absolute;left:1442px;top:334.5px;width:16px;height:27.6px;background:rgba(90,120,90,0.25)"></div>
<div style="position:absolute;left:1443px;top:373px;width:14px;height:2px;background:#6f93b6"></div>
<div style="position:absolute;left:1200px;top:102.5px;width:260px;height:40px;background:#00182c;border:1px solid #12385a"></div>
<svg style="position:absolute;left:1200px;top:102px" width="258" height="40" viewBox="1200 102 258 40">
<g fill="#8c8c8c"><rect x="1215.3" y="116.3" width="2.5" height="2.5"/><rect x="1220" y="116.3" width="2.5" height="2.5"/><rect x="1215.3" y="121" width="2.5" height="2.5"/><rect x="1220" y="121" width="2.5" height="2.5"/><rect x="1215.3" y="125.8" width="2.5" height="2.5"/><rect x="1220" y="125.8" width="2.5" height="2.5"/></g>
<path d="M1242 115.4 V129.6" stroke="#75beff" stroke-width="2"/>
<path d="M1246.6 117 L1254.8 122.5 L1246.6 128 Z" fill="none" stroke="#75beff" stroke-width="1.7"/>
<path d="M1279 121.5 C1281 115.5 1289.5 114.5 1293 119.5" fill="none" stroke="#75beff" stroke-width="1.7"/>
<path d="M1293.3 114.7 V120 H1288" fill="none" stroke="#75beff" stroke-width="1.7"/>
<circle cx="1285.8" cy="127.2" r="2.3" fill="#75beff"/>
<path d="M1324.4 113.8 V123 M1320 118.5 L1324.4 122.9 L1328.8 118.5" fill="none" stroke="#75beff" stroke-width="1.6"/>
<circle cx="1324.4" cy="128.4" r="2.3" fill="#75beff"/>
<path d="M1362.8 114.5 V124 M1358.4 119 L1362.8 114.6 L1367.2 119" fill="none" stroke="#75beff" stroke-width="1.6"/>
<circle cx="1362.8" cy="128.2" r="2.3" fill="#75beff"/>
<path d="M1396.2 117.6 A6.4 6.4 0 1 1 1396 127" fill="none" stroke="#89d185" stroke-width="1.7"/>
<path d="M1394.3 116 V120.2 H1398.6" fill="none" stroke="#89d185" stroke-width="1.6"/>
<g fill="none" stroke="#f48771" stroke-width="1.4"><path d="M1431 129.8 L1434 126.8 M1444.5 117 L1447.5 114"/>
<path d="M1433.5 122.7 L1438.7 127.9 L1436.6 130 Q1435 131 1433.5 130 L1432 128.5 Q1431 127 1432 125.5 Z"/>
<path d="M1438.8 118.5 L1441 116.3 Q1442.5 115.3 1444 116.3 L1445.6 117.9 Q1446.6 119.4 1445.6 120.9 L1443.4 123.1 Z"/>
<path d="M1436 125.4 L1438.5 122.9 M1438 127.4 L1440.5 124.9"/></g>
</svg>
<div style="position:absolute;left:56px;top:925px;width:1402px;height:26px;background:#232938"></div>
<div style="position:absolute;left:56px;top:925px;width:41px;height:26px;background:#4e6a82"></div>
<svg style="position:absolute;left:68px;top:930px" width="16" height="16" viewBox="0 0 16 16"><path d="M3 4.5 L7.2 8.6 L3 12.8 M13.2 2.5 L9.2 6.4 L13.2 10.4" fill="none" stroke="#ffffff" stroke-width="1.3"/></svg>
<svg style="position:absolute;left:0;top:920px" width="1514" height="35" viewBox="0 920 1514 35"><g fill="none" stroke="#8ea6bc" stroke-width="1.2">
<circle cx="111" cy="931.8" r="2.2"/><circle cx="111" cy="943" r="2.2"/><circle cx="118.8" cy="934.5" r="2.2"/>
<path d="M111 934 V940.8 M118.8 936.7 Q118.8 939.5 111.5 940.5"/>
<circle cx="203.6" cy="937.6" r="7"/><path d="M200.4 934.4 L206.8 940.8 M206.8 934.4 L200.4 940.8"/>
<path d="M236 930.6 L243.2 943.4 H228.8 Z" stroke-linejoin="round"/><path d="M236 935 V939.5 M236 941 V942"/>
<path d="M284 931 H277.6 V944.4 H291 V938 M285 930.8 H291.2 V937 M291.2 930.8 L283.5 938.5"/>
<path d="M1352.8 938.5 L1356.5 942.5 L1365.6 932.6"/>
<path d="M1395 931 H1402.6 V937.4 H1399.5 L1397.2 939.5"/><circle cx="1392.2" cy="937" r="2.8"/><path d="M1387.8 944.8 Q1388.5 940.8 1392.2 940.5 Q1395.9 940.8 1396.5 944.8"/>
<path d="M1426 941.8 Q1427.2 940 1427.2 937 Q1427.2 931 1431.2 931 Q1435.2 931 1435.2 937 Q1435.2 940 1436.5 941.8 Z M1429.8 943.5 Q1431.2 945.2 1432.6 943.5"/>
</g></svg>
<div style="position:absolute;left:127.5px;top:926px;height:25px;line-height:25px;white-space:pre;font-size:14.2px;color:#8ea6bc;letter-spacing:-0.15px">master*</div>
<div style="position:absolute;left:216px;top:926px;height:25px;line-height:25px;white-space:pre;font-size:14px;color:#8ea6bc;letter-spacing:-0.15px">0</div>
<div style="position:absolute;left:248.5px;top:926px;height:25px;line-height:25px;white-space:pre;font-size:14px;color:#8ea6bc;letter-spacing:-0.15px">0</div>
<div style="position:absolute;left:296px;top:926px;height:25px;line-height:25px;white-space:pre;font-size:13.6px;color:#8ea6bc;letter-spacing:-0.15px">Live Share</div>
<div style="position:absolute;left:381px;top:926px;height:25px;line-height:25px;white-space:pre;font-size:13.7px;color:#8ea6bc;letter-spacing:-0.15px">Git Graph</div>
<div style="position:absolute;left:460px;top:926px;height:25px;line-height:25px;white-space:pre;font-size:13.9px;color:#8ea6bc;letter-spacing:-0.15px">Auto Attach: On</div>
<div style="position:absolute;left:884px;top:926px;height:25px;line-height:25px;white-space:pre;font-size:13.8px;color:#8ea6bc;letter-spacing:-0.15px">Ln 22, Col 13</div>
<div style="position:absolute;left:985px;top:926px;height:25px;line-height:25px;white-space:pre;font-size:13.8px;color:#8ea6bc;letter-spacing:-0.15px">Spaces: 2</div>
<div style="position:absolute;left:1066px;top:926px;height:25px;line-height:25px;white-space:pre;font-size:13.8px;color:#8ea6bc;letter-spacing:-0.15px">UTF-8</div>
<div style="position:absolute;left:1126px;top:926px;height:25px;line-height:25px;white-space:pre;font-size:13.8px;color:#8ea6bc;letter-spacing:-0.15px">LF</div>
<div style="position:absolute;left:1161px;top:926px;height:25px;line-height:25px;white-space:pre;font-size:13.8px;color:#8ea6bc;letter-spacing:-0.15px">TypeScript</div>
<div style="position:absolute;left:1248px;top:926px;height:25px;line-height:25px;white-space:pre;font-size:13.8px;color:#8ea6bc;letter-spacing:-0.15px">3.8.3</div>
<div style="position:absolute;left:1298px;top:926px;height:25px;line-height:25px;white-space:pre;font-size:13.8px;color:#8ea6bc;letter-spacing:-0.15px">Prettier:</div>
<svg style="position:absolute;left:0;top:0" width="1514" height="1025" viewBox="0 0 1514 1025"><path fill="none" stroke="#34495e" stroke-width="1.6" stroke-linejoin="round" d="M79.3 82 H73 a1 1 0 0 0 -1 1 V101.5 a1 1 0 0 0 1 1 H88.5 a1 1 0 0 0 1 -1 V95.4"/><path fill="none" stroke="#34495e" stroke-width="1.6" stroke-linejoin="round" d="M80.3 74.4 H90.5 L96.8 80.7 V94.4 a1 1 0 0 1 -1 1 H80.3 a1 1 0 0 1 -1 -1 V75.4 a1 1 0 0 1 1 -1 Z"/><path fill="#34495e" d="M90.5 74.4 L96.8 80.7 H90.5 Z"/><circle fill="none" stroke="#34495e" stroke-width="1.6" stroke-linejoin="round" cx="88.8" cy="145.7" r="9.3"/><path fill="none" stroke="#34495e" stroke-width="1.6" stroke-linejoin="round" stroke-linecap="round" d="M82.2 152.5 L72.3 163.2"/><circle fill="none" stroke="#34495e" stroke-width="1.6" stroke-linejoin="round" cx="78.5" cy="203.5" r="3.6"/><circle fill="none" stroke="#34495e" stroke-width="1.6" stroke-linejoin="round" cx="91.2" cy="209" r="3.6"/><circle fill="none" stroke="#34495e" stroke-width="1.6" stroke-linejoin="round" cx="78.5" cy="223" r="3.6"/><path fill="none" stroke="#34495e" stroke-width="1.6" stroke-linejoin="round" d="M78.5 207.1 V219.4 M91.2 212.6 C91.2 217 84 216 80.8 220.4"/><path fill="none" stroke="#7d94ab" stroke-width="1.6" stroke-linejoin="round" d="M80 274.2 V261.8 L98.6 273.3 L94.8 275.6"/><ellipse fill="none" stroke="#7d94ab" stroke-width="1.6" stroke-linejoin="round" cx="77.5" cy="283.2" rx="4.3" ry="6.2"/><path fill="none" stroke="#7d94ab" stroke-width="1.6" stroke-linejoin="round" d="M73.4 280 H81.6 M73.3 279.5 L70.8 277.5 M81.7 279.5 L84.2 277.5 M73.2 283.8 H70.2 M73.3 287.2 L71 289.5 M81.7 287.2 L84 289.5"/><rect fill="none" stroke="#1c3b58" stroke-width="1" x="66.5" y="257.5" width="39.5" height="38.5"/><path fill="none" stroke="#34495e" stroke-width="1.6" stroke-linejoin="round" d="M72 330.3 H81.5 a1 1 0 0 1 1 1 V341 H93.6 V350.3 a1 1 0 0 1 -1 1 H72 a1 1 0 0 1 -1 -1 V331.3 a1 1 0 0 1 1 -1 Z M71 341 H82.5 V351.3"/><rect fill="none" stroke="#34495e" stroke-width="1.6" stroke-linejoin="round" x="87.4" y="323.4" width="11.2" height="11.6" rx="1.5"/><path fill="none" stroke="#34495e" stroke-width="1.6" stroke-linejoin="round" d="M83.5 408.2 H71.8 V389.6 H96.8 V398.5 M77 412 H83.6"/><circle fill="none" stroke="#34495e" stroke-width="1.6" stroke-linejoin="round" cx="91.7" cy="407" r="6.6"/><path fill="none" stroke="#34495e" stroke-width="1.2" d="M88.6 405.6 L90.4 407.3 L88.6 409 M95 404.3 L93.2 406 L95 407.7"/><path fill="none" stroke="#34495e" stroke-width="1.6" stroke-linejoin="round" stroke-width="1.4" d="M71.3 454.2 H76.5 L83.2 463.8 V454.2 H87.9 V471.8 H83 L76 461.9 V471.8 H71.3 Z"/><path fill="none" stroke="#34495e" stroke-width="1.6" stroke-linejoin="round" stroke-width="1.4" d="M91.5 455 H94.3 L98.9 460.5 L94.3 466.2 H91.5 L95.9 460.5 Z M91 469.2 H99 V471.8 H91 Z"/><path fill="none" stroke="#34495e" stroke-width="1.6" stroke-linejoin="round" d="M77.1 512.2 H93.7 V538 L85.4 531.8 L77.1 538 Z"/><circle fill="none" stroke="#34495e" stroke-width="1.6" stroke-linejoin="round" cx="85.2" cy="588" r="13.8"/><path fill="none" stroke="#34495e" stroke-width="1.6" stroke-linejoin="round" d="M83 581 V595.2 M83 581 L90.6 588.4"/><circle fill="#34495e" cx="83" cy="581.2" r="2.5"/><circle fill="#34495e" cx="90.6" cy="588.4" r="2.5"/><circle fill="#34495e" cx="83" cy="595" r="2.5"/><path fill="none" stroke="#34495e" stroke-width="1.6" stroke-linejoin="round" d="M82 657 C76 659 71 655 74 650 C71 646 74 641 78.5 642 C79 637 85 634.5 88.5 638 C93 637 96 641 95 645 C99 648 97 655 92 656.5 C90.5 658 89 658 87.5 657.5 L88.5 663.5 H81.5 L82.5 657.5"/><path fill="none" stroke="#34495e" stroke-width="1.6" stroke-linejoin="round" d="M79 648.5 L83.2 652.5 L90.5 645"/><path fill="#34495e" d="M70.8 714 H93.5 C94.5 712.5 94 710 93 708.5 L94 707 C95.5 708 96.3 709.5 96.5 711 C97.5 711 98.5 711.3 99 712 C98 713.5 96.5 714 95 714 C92 721 85 724.5 77 724.2 C72 724 70.5 719 70.8 714 Z"/><rect fill="#34495e" x="73.5" y="710.3" width="2.6" height="2.8"/><rect fill="#34495e" x="76.5" y="710.3" width="2.6" height="2.8"/><rect fill="#34495e" x="79.5" y="710.3" width="2.6" height="2.8"/><rect fill="#34495e" x="82.5" y="710.3" width="2.6" height="2.8"/><rect fill="#34495e" x="85.5" y="710.3" width="2.6" height="2.8"/><rect fill="#34495e" x="76.5" y="707" width="2.6" height="2.8"/><rect fill="#34495e" x="79.5" y="707" width="2.6" height="2.8"/><rect fill="#34495e" x="82.5" y="707" width="2.6" height="2.8"/><rect fill="#34495e" x="82.5" y="703.7" width="2.6" height="2.8"/><rect fill="#34495e" x="71.8" y="765.5" width="24.5" height="22.5" rx="2.8"/><path fill="none" stroke="#000820" stroke-width="5.2" stroke-linecap="round" d="M77.8 786 C76 778 80 771.5 88.5 770.2"/><path fill="none" stroke="#34495e" stroke-width="2.4" stroke-linecap="round" d="M77.8 786 C76 778 80 771.5 88.5 770.2"/><path fill="#34495e" stroke="#000820" stroke-width="1.4" stroke-linejoin="round" d="M87.8 762 L98.8 768.2 L92 778 Z"/><circle fill="#34495e" stroke="#000820" stroke-width="1.6" cx="90.5" cy="784.3" r="4.8"/><polygon fill="none" stroke="#34495e" stroke-width="1.6" stroke-linejoin="round" points="80.98,880.77 82.48,876.21 87.32,876.21 88.82,880.77 88.87,880.79 93.16,878.62 96.58,882.04 94.41,886.33 94.43,886.38 98.99,887.88 98.99,892.72 94.43,894.22 94.41,894.27 96.58,898.56 93.16,901.98 88.87,899.81 88.82,899.83 87.32,904.39 82.48,904.39 80.98,899.83 80.93,899.81 76.64,901.98 73.22,898.56 75.39,894.27 75.37,894.22 70.81,892.72 70.81,887.88 75.37,886.38 75.39,886.33 73.22,882.04 76.64,878.62 80.93,880.79"/><circle fill="none" stroke="#34495e" stroke-width="1.6" stroke-linejoin="round" cx="84.9" cy="890.3" r="3.6"/><circle fill="#4e6275" stroke="#000820" stroke-width="1.5" cx="93" cy="224" r="10.5"/><text x="93" y="228.5" fill="#fff" font-family="Liberation Sans" font-weight="bold" font-size="12.5" text-anchor="middle">3</text><circle fill="#4e6275" stroke="#000820" stroke-width="1.5" cx="93" cy="286.7" r="10.5"/><path fill="#fff" d="M92.6 282.09999999999997 H94.6 V291.3 H92.5 V284.7 Q91.5 285.5 89.8 285.7 V283.9 Q91.8 283.5 92.6 282.09999999999997 Z"/></svg>
</div></div>
<div style="position:absolute;left:56px;top:38px;width:1402px;height:913px;border-radius:6px;box-shadow:inset 0 0 0 1px rgba(200,205,210,0.42)"></div>
</body></html>
